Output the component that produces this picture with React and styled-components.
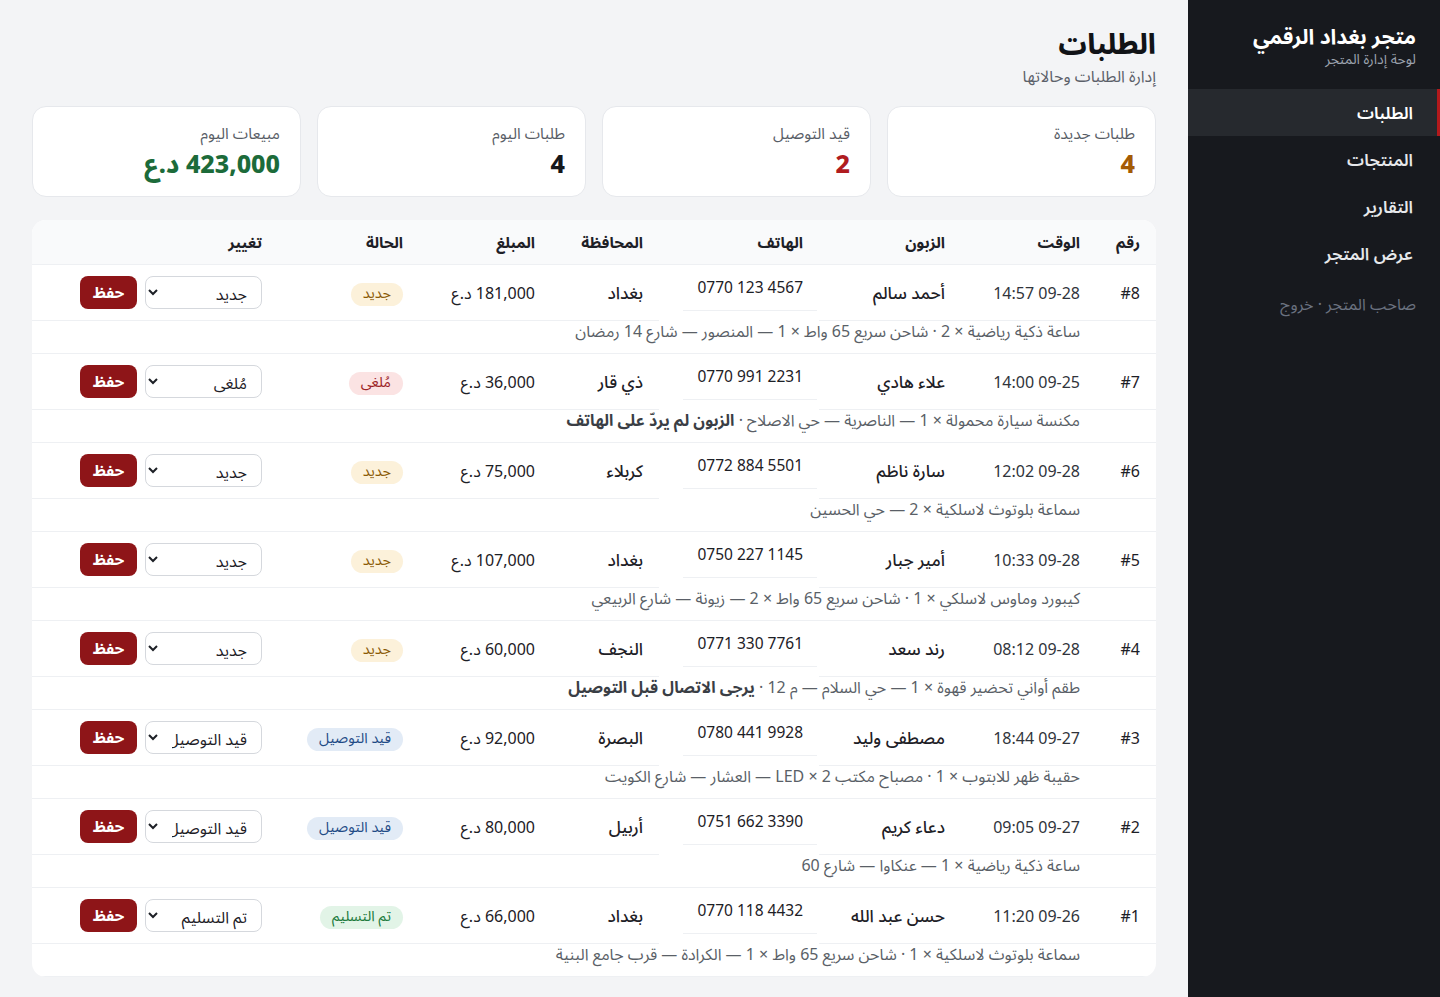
import React from 'react'
import styled, { createGlobalStyle } from 'styled-components'

const GlobalStyle = createGlobalStyle`
  html, body {
    margin: 0;
    padding: 0;
    background: #f3f4f6;
  }
  body {
    font-family: "Noto Sans Arabic", "Noto Sans", "DejaVu Sans", sans-serif;
    color: #1d2026;
  }
  * { box-sizing: border-box; }
`

const FONT = `"Noto Sans Arabic", "Noto Sans", "DejaVu Sans", sans-serif`

export const Layout = styled.div`
  display: flex;
  direction: rtl;
  min-height: 997px;
`

export const Sidebar = styled.aside`
  width: 252px;
  flex-shrink: 0;
  background: #17191e;
  color: #fff;
  display: flex;
  flex-direction: column;
`

export const Brand = styled.div`
  padding: 23px 24px 0;
  height: 89px;
`

export const BrandTitle = styled.div`
  font-size: 21px;
  font-weight: 700;
  line-height: 28px;
  color: #ffffff;
`

export const BrandSub = styled.div`
  font-size: 14px;
  line-height: 18px;
  color: #9ca3af;
`

export const NavItem = styled.div`
  height: 47px;
  display: flex;
  align-items: center;
  padding: 2px 24px 0 0;
  border-right: 3px solid ${({ active }) => (active ? '#b3191c' : 'transparent')};
  background: ${({ active }) => (active ? '#26292e' : 'transparent')};
  font-size: 17px;
  font-weight: 600;
  color: ${({ active }) => (active ? '#ffffff' : '#e6e8eb')};
`

export const SideFooter = styled.div`
  padding: 11px 24px 0 0;
  font-size: 16px;
  color: #6b7280;
`

export const Main = styled.main`
  flex: 1;
  padding: 27px 32px 22px;
`

export const PageTitle = styled.h1`
  margin: 0;
  font-size: 28px;
  line-height: 38px;
  font-weight: 800;
  color: #111317;
`

export const PageSub = styled.div`
  font-size: 16px;
  line-height: 24px;
  color: #5b6069;
`

export const Stats = styled.div`
  display: grid;
  grid-template-columns: repeat(4, 1fr);
  gap: 16px;
  margin-top: 17px;
`

export const StatCard = styled.div`
  background: #fff;
  border: 1px solid #e6e8ec;
  border-radius: 14px;
  padding: 15px 20px 0;
  height: 91px;
`

export const StatLabel = styled.div`
  font-size: 15.5px;
  line-height: 24px;
  color: #585d66;
`

export const StatValue = styled.div`
  margin-top: 3px;
  font-size: 25px;
  line-height: 32px;
  font-weight: 800;
  color: ${({ color }) => color};
`

export const TableCard = styled.div`
  margin-top: 23px;
  background: #fff;
  border-radius: 14px;
  overflow: hidden;
`

export const Table = styled.table`
  width: 100%;
  border-collapse: collapse;
  table-layout: fixed;
  font-family: ${FONT};
`

export const Th = styled.th`
  height: 44px;
  background: #f9fafb;
  text-align: right;
  padding: 2px 16px 0;
  font-size: 15.5px;
  font-weight: 700;
  color: #1d2026;
  border-bottom: 1px solid #eef0f3;
`

export const Td = styled.td`
  height: 56px;
  padding: 3px 16px 0;
  font-size: ${({ ar }) => (ar ? '17px' : '16px')};
  font-weight: ${({ ar }) => (ar ? 500 : 400)};
  line-height: 24px;
  color: ${({ muted }) => (muted ? '#30343b' : '#1d2026')};
  border-bottom: 1px solid #eef0f3;
  white-space: nowrap;
  vertical-align: middle;
`

export const ActionTd = styled(Td)`
  padding-top: 0;
`

export const PhoneTd = styled(Td)`
  vertical-align: top;
  padding: 12px 2px 0 0;
  line-height: 22px;
  border-bottom: none;
`

export const Phone = styled.span`
  display: inline-block;
  direction: ltr;
  padding: 0 14px 11px;
  line-height: 22px;
  font-size: 15.5px;
  border-bottom: 1px solid #eef0f3;
  color: #1d2026;
`

export const DetailTd = styled.td`
  height: 33px;
  padding: 0 16px 10px;
  font-size: 16px;
  line-height: 22px;
  color: #5a5f67;
  border-bottom: 1px solid #eef0f3;
  white-space: nowrap;
  vertical-align: top;

  strong {
    color: #3a3e45;
    font-weight: 700;
  }
`

export const EmptyTd = styled.td`
  border-bottom: 1px solid #eef0f3;
`

const badgeColors = {
  'جديد': ['#fcf1da', '#8a5a06'],
  'مُلغى': ['#fbe3e3', '#9b2226'],
  'قيد التوصيل': ['#e2ebf6', '#1f4b86'],
  'تم التسليم': ['#e2f4e7', '#207a3c'],
}

export const Badge = styled.span`
  display: inline-flex;
  align-items: center;
  height: 23px;
  padding: 0 12px;
  border-radius: 999px;
  font-size: 14.5px;
  font-weight: 400;
  background: ${({ status }) => badgeColors[status][0]};
  color: ${({ status }) => badgeColors[status][1]};
`

export const Actions = styled.div`
  display: flex;
  align-items: center;
  gap: 8px;
`

export const Select = styled.select`
  width: 117px;
  height: 33px;
  border: 1px solid #d5d8dd;
  border-radius: 8px;
  background: #fff;
  padding: 0 10px;
  font-family: ${FONT};
  font-size: 16px;
  color: #1d2026;
`

export const SaveButton = styled.button`
  width: 57px;
  height: 33px;
  border: none;
  border-radius: 8px;
  background: #8e1518;
  color: #fff;
  font-family: ${FONT};
  font-size: 15.5px;
  font-weight: 700;
  cursor: pointer;
`

const nav = ['الطلبات', 'المنتجات', 'التقارير', 'عرض المتجر']

const stats = [
  { label: 'طلبات جديدة', value: '4', color: '#a45b05' },
  { label: 'قيد التوصيل', value: '2', color: '#b01c1f' },
  { label: 'طلبات اليوم', value: '4', color: '#15171b' },
  { label: 'مبيعات اليوم', value: '423,000 د.ع', color: '#1c6b3a' },
]

const statuses = ['جديد', 'قيد التوصيل', 'تم التسليم', 'مُلغى']

const orders = [
  { id: 8, time: '09-28 14:57', name: 'أحمد سالم', phone: '0770 123 4567', city: 'بغداد', amount: '181,000', status: 'جديد',
    detail: 'ساعة ذكية رياضية × 2 · شاحن سريع 65 واط × 1 — المنصور — شارع 14 رمضان' },
  { id: 7, time: '09-25 14:00', name: 'علاء هادي', phone: '0770 991 2231', city: 'ذي قار', amount: '36,000', status: 'مُلغى',
    detail: 'مكنسة سيارة محمولة × 1 — الناصرية — حي الاصلاح', note: 'الزبون لم يردّ على الهاتف' },
  { id: 6, time: '09-28 12:02', name: 'سارة ناظم', phone: '0772 884 5501', city: 'كربلاء', amount: '75,000', status: 'جديد',
    detail: 'سماعة بلوتوث لاسلكية × 2 — حي الحسين' },
  { id: 5, time: '09-28 10:33', name: 'أمير جبار', phone: '0750 227 1145', city: 'بغداد', amount: '107,000', status: 'جديد',
    detail: 'كيبورد وماوس لاسلكي × 1 · شاحن سريع 65 واط × 2 — زيونة — شارع الربيعي' },
  { id: 4, time: '09-28 08:12', name: 'رند سعد', phone: '0771 330 7761', city: 'النجف', amount: '60,000', status: 'جديد',
    detail: 'طقم أواني تحضير قهوة × 1 — حي السلام — م 12', note: 'يرجى الاتصال قبل التوصيل' },
  { id: 3, time: '09-27 18:44', name: 'مصطفى وليد', phone: '0780 441 9928', city: 'البصرة', amount: '92,000', status: 'قيد التوصيل',
    detail: 'حقيبة ظهر للابتوب × 1 · مصباح مكتب LED × 2 — العشار — شارع الكويت' },
  { id: 2, time: '09-27 09:05', name: 'دعاء كريم', phone: '0751 662 3390', city: 'أربيل', amount: '80,000', status: 'قيد التوصيل',
    detail: 'ساعة ذكية رياضية × 1 — عنكاوا — شارع 60' },
  { id: 1, time: '09-26 11:20', name: 'حسن عبد الله', phone: '0770 118 4432', city: 'بغداد', amount: '66,000', status: 'تم التسليم',
    detail: 'سماعة بلوتوث لاسلكية × 1 · شاحن سريع 65 واط × 1 — الكرادة — قرب جامع البنية' },
]

const columns = [
  ['رقم', 60], ['الوقت', 135], ['الزبون', 142], ['الهاتف', 160],
  ['المحافظة', 108], ['المبلغ', 132], ['الحالة', 141], ['تغيير', 246],
]

const OrderRows = ({ order }) => (
  <>
    <tr>
      <Td>#{order.id}</Td>
      <Td muted>{order.time}</Td>
      <Td ar>{order.name}</Td>
      <PhoneTd><Phone>{order.phone}</Phone></PhoneTd>
      <Td ar>{order.city}</Td>
      <Td>{order.amount} د.ع</Td>
      <Td><Badge status={order.status}>{order.status}</Badge></Td>
      <ActionTd>
        <Actions>
          <Select defaultValue={order.status}>
            {statuses.map((s) => <option key={s} value={s}>{s}</option>)}
          </Select>
          <SaveButton>حفظ</SaveButton>
        </Actions>
      </ActionTd>
    </tr>
    <tr>
      <EmptyTd />
      <DetailTd colSpan={7}>
        {order.detail}
        {order.note && <> · <strong>{order.note}</strong></>}
      </DetailTd>
    </tr>
  </>
)

const App = () => (
  <>
    <GlobalStyle />
    <Layout>
      <Sidebar>
        <Brand>
          <BrandTitle>متجر بغداد الرقمي</BrandTitle>
          <BrandSub>لوحة إدارة المتجر</BrandSub>
        </Brand>
        {nav.map((item, i) => (
          <NavItem key={item} active={i === 0}>{item}</NavItem>
        ))}
        <SideFooter>صاحب المتجر · خروج</SideFooter>
      </Sidebar>
      <Main>
        <PageTitle>الطلبات</PageTitle>
        <PageSub>إدارة الطلبات وحالاتها</PageSub>
        <Stats>
          {stats.map((s) => (
            <StatCard key={s.label}>
              <StatLabel>{s.label}</StatLabel>
              <StatValue color={s.color}>{s.value}</StatValue>
            </StatCard>
          ))}
        </Stats>
        <TableCard>
          <Table>
            <colgroup>
              {columns.map(([c, w]) => <col key={c} style={{ width: w }} />)}
            </colgroup>
            <thead>
              <tr>
                {columns.map(([c]) => <Th key={c}>{c}</Th>)}
              </tr>
            </thead>
            <tbody>
              {orders.map((o) => <OrderRows key={o.id} order={o} />)}
            </tbody>
          </Table>
        </TableCard>
      </Main>
    </Layout>
  </>
)

export default App
